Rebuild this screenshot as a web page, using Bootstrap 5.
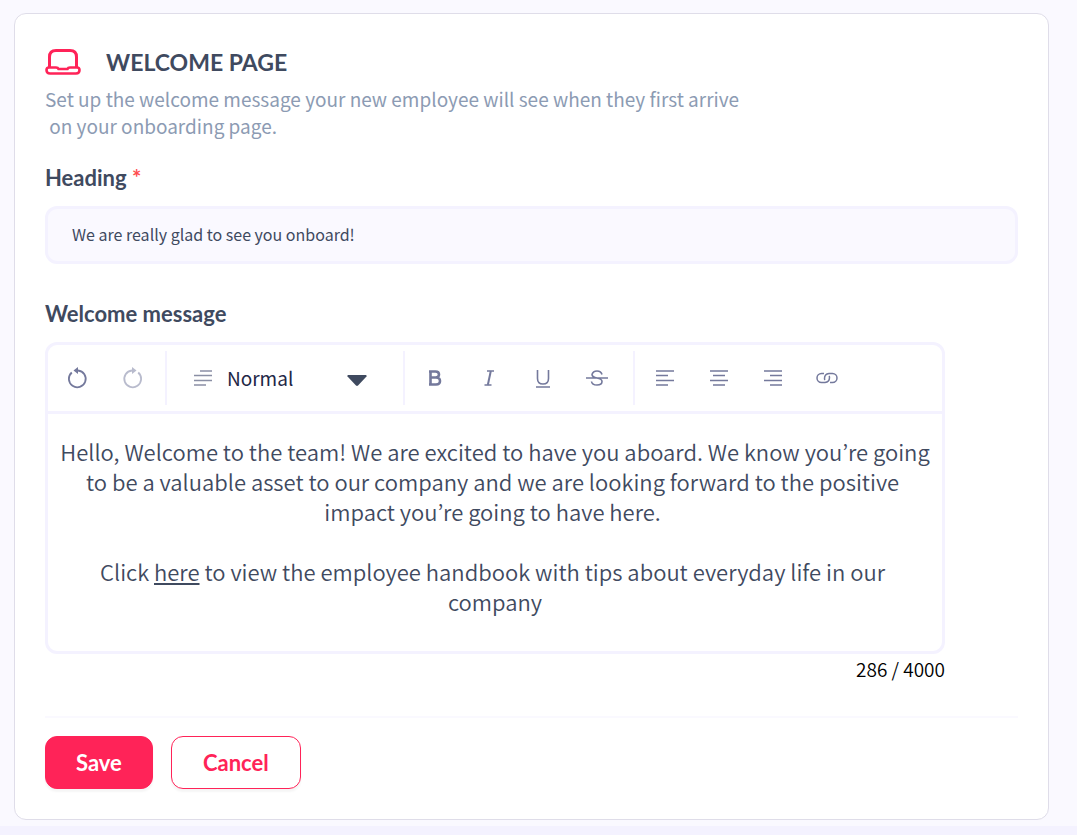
<!DOCTYPE html>
<html lang="en">
<head>
<meta charset="utf-8">
<meta name="viewport" content="width=device-width, initial-scale=1">
<title>Welcome page</title>
<link href="https://cdn.jsdelivr.net/npm/bootstrap@5.3.0/dist/css/bootstrap.min.css" rel="stylesheet">
<style>
:root { --ink: #3f4a5f; --accent: #ff2358; --line: #f4f2ff; --tool: #74799c; }
body { background: #faf9ff; color: var(--ink); font-family: "Noto Sans CJK KR", "Open Sans", sans-serif; font-weight: 350; }
.page-wrap { padding: 13px 28px 6px 14px; }
.panel { border: 1px solid #dfdde9; border-radius: 12px; padding: 30px; }
.title-text, .field-title, .action { font-family: Lato, sans-serif; font-weight: 700; }
.title-row { height: 36px; gap: 25px; }
.title-text { font-size: 23px; line-height: 36px; }
.intro { color: #8c9bb3; font-size: 19px; font-weight: 400; line-height: 27px; margin: 5px 0 24px; }
.field-title { font-size: 22px; line-height: 30px; margin-bottom: 13px; }
.message-title { margin-top: 35px; }
.star { color: #ff4d4f; }
.heading-input, .heading-input:focus { height: 58px; border: 3px solid var(--line); border-radius: 12px; background: #faf9ff; color: var(--ink); font-size: 16px; font-weight: 400; padding: 0 24px 2px; }
.editor-col { max-width: 900px; }
.editor { border: 3px solid var(--line); border-radius: 12px; }
.toolbar { height: 69px; border-bottom: 3px solid var(--line); padding: 6px 0; }
.tool-group { padding: 0 9px 0 3px; border-right: 2px solid var(--line); }
.tool-group:first-child { padding: 0 6px 0 3px; }
.tool-group:last-child { border: 0; }
.tool { width: 54px; border: 0; background: none; color: var(--tool); padding: 0; }
.tool svg { display: block; margin: auto; }
.tool:disabled { opacity: .5; }
.tool-group.style-pick { width: 238px; padding: 0 36px 0 26px; color: #8a8fa5; }
.style-pick select { appearance: none; border: 0; background: none; color: #1f2747; font-size: 19px; font-weight: 400; line-height: 30px; padding: 0 0 0 14px; }
.style-pick .caret { margin-top: 3px; }
.message { font-size: 22px; line-height: 30px; padding: 22px 8px 35px; }
.message a { color: inherit; }
.counter { color: #000; font-size: 19px; line-height: 30px; }
.rule { border-top: 2px solid #faf9ff; margin: 32px 0 18px; }
.action { height: 53px; border: 1px solid var(--accent); border-radius: 12px; padding: 0 30px; font-size: 22px; box-shadow: 0 3px 2px #0000000a; }
.save { background: var(--accent); color: #fff; }
.cancel { background: #fff; color: var(--accent); min-width: 130px; }
.foot { height: 9px; background: var(--line); }
</style>
</head>
<body>
<main class="page-wrap">
  <form class="panel bg-white">
    <div class="title-row d-flex align-items-center">
      <svg width="36" height="28" viewBox="0 0 36 28" fill="none" stroke="#ff2358" stroke-width="3" stroke-linejoin="round" aria-hidden="true"><path d="M4.500 19V9Q4.500 2.500 11 2.500H25Q31.500 2.500 31.500 9V19"/><path d="M4 19.500H11Q13 19.500 13.500 21H22.500Q23 19.500 25 19.500H32Q34.500 19.500 34.500 22Q34.500 25.500 31 25.500H5Q1.500 25.500 1.500 22Q1.500 19.500 4 19.500Z" stroke-width="2.600"/></svg>
      <h1 class="title-text mb-0">WELCOME PAGE</h1>
    </div>
    <p class="intro">Set up the welcome message your new employee will see when they first arrive<br>&nbsp;on your onboarding page.</p>

    <label class="field-title d-block" for="heading">Heading <span class="star">*</span></label>
    <input class="form-control heading-input" id="heading" type="text" value="We are really glad to see you onboard!" required>

    <div class="editor-col">
      <div class="field-title message-title" id="message-label">Welcome message</div>
      <div class="editor">
        <div class="toolbar d-flex" role="toolbar" aria-label="Formatting">
          <div class="tool-group d-flex">
            <button class="tool" type="button" aria-label="Undo"><svg width="22" height="24" viewBox="0 0 22 24" fill="none" stroke="currentColor" stroke-width="1.800"><path d="M4.800 6.500A8.400 8.400 0 1 0 11 4.500"/><path d="M11 1V8L6.500 4.500Z" fill="currentColor" stroke="none"/></svg></button>
            <button class="tool" type="button" aria-label="Redo" disabled><svg width="22" height="24" viewBox="0 0 22 24" fill="none" stroke="currentColor" stroke-width="1.800"><path d="M17.200 6.500A8.400 8.400 0 1 1 11 4.500"/><path d="M11 1V8L15.500 4.500Z" fill="currentColor" stroke="none"/></svg></button>
          </div>
          <div class="tool-group style-pick d-flex align-items-center">
            <svg class="flex-shrink-0" width="20" height="18" viewBox="0 0 20 18" stroke="currentColor" stroke-width="1.500" aria-hidden="true"><path d="M7 2H19M1 6.500H19M1 11.500H19M1 16H13"/></svg>
            <select class="flex-grow-1" aria-label="Text style"><option>Normal</option><option>Heading</option></select>
            <svg class="caret flex-shrink-0" width="20" height="12" viewBox="0 0 20 12" fill="#3f4a5f" aria-hidden="true"><path d="M1 1H19Q20 1.500 19.500 2.500L11 11.500Q10 12.300 9 11.500L.5 2.500Q0 1.500 1 1Z"/></svg>
          </div>
          <div class="tool-group d-flex">
            <button class="tool" type="button" aria-label="Bold"><svg width="22" height="22" viewBox="0 0 22 22" fill="none" stroke="currentColor" stroke-width="2.600"><path d="M6.500 4.500V17.500M5 4.500H11.500Q15 4.500 15 7.500T11.500 10.500H7M7 10.500H12Q16 10.500 16 14T12 17.500H5"/></svg></button>
            <button class="tool" type="button" aria-label="Italic"><svg width="22" height="22" viewBox="0 0 22 22" fill="none" stroke="currentColor"><path d="M9 4H16M6.500 18H13.500" stroke-width="1.300"/><path d="M12.800 4L9.800 18" stroke-width="2"/></svg></button>
            <button class="tool" type="button" aria-label="Underline"><svg width="22" height="22" viewBox="0 0 22 22" fill="none" stroke="currentColor" stroke-width="1.600"><path d="M5.500 3V11.500Q5.500 17 11 17T16.500 11.500V3M4 20H18"/></svg></button>
            <button class="tool" type="button" aria-label="Strikethrough"><svg width="24" height="22" viewBox="0 0 24 22" fill="none" stroke="currentColor" stroke-width="1.600"><path d="M1 11H23M17 7.500Q16 4 12 4T7 7.500Q7 10 12 11T17 14.500Q17 18 12 18T6.500 14.500"/></svg></button>
          </div>
          <div class="tool-group d-flex">
            <button class="tool" type="button" aria-label="Align left"><svg width="20" height="18" viewBox="0 0 20 18" stroke="currentColor" stroke-width="1.500"><path d="M1 2H19M1 6.500H13M1 11.500H19M1 16H13"/></svg></button>
            <button class="tool" type="button" aria-label="Align centre"><svg width="20" height="18" viewBox="0 0 20 18" stroke="currentColor" stroke-width="1.500"><path d="M1 2H19M4 6.500H16M1 11.500H19M4 16H16"/></svg></button>
            <button class="tool" type="button" aria-label="Align right"><svg width="20" height="18" viewBox="0 0 20 18" stroke="currentColor" stroke-width="1.500"><path d="M1 2H19M7 6.500H19M1 11.500H19M7 16H19"/></svg></button>
            <button class="tool" type="button" aria-label="Insert link"><svg width="22" height="12" viewBox="0 0 22 12" fill="none" stroke="currentColor" stroke-width="1.500"><path d="M8 1.500H5.500A4.500 4.500 0 0 0 5.500 10.500H9Q13.500 10 13.500 5.500Q13.500 4.500 13 4"/><path d="M14 10.500H16.500A4.500 4.500 0 0 0 16.500 1.500H13Q8.500 2 8.500 6.500Q8.500 7.500 9 8"/></svg></button>
          </div>
        </div>
        <div class="message text-center" contenteditable="true" role="textbox" aria-multiline="true" aria-labelledby="message-label" spellcheck="false">Hello, Welcome to the team! We are excited to have you aboard. We know you’re going<br>to be a valuable asset to our company and we are looking forward to the positive&nbsp;<br>impact you’re going to have here.&nbsp;<br><br>Click <a href="#handbook">here</a> to view the employee handbook with tips about everyday life in our&nbsp;<br>company</div>
      </div>
      <div class="counter text-end">286 / 4000</div>
    </div>

    <div class="rule"></div>
    <div class="d-flex" style="gap:18px">
      <button class="action save" type="submit">Save</button>
      <button class="action cancel" type="button">Cancel</button>
    </div>
  </form>
</main>
<div class="foot"></div>
<script src="https://cdn.jsdelivr.net/npm/bootstrap@5.3.0/dist/js/bootstrap.bundle.min.js"></script>
</body>
</html>
